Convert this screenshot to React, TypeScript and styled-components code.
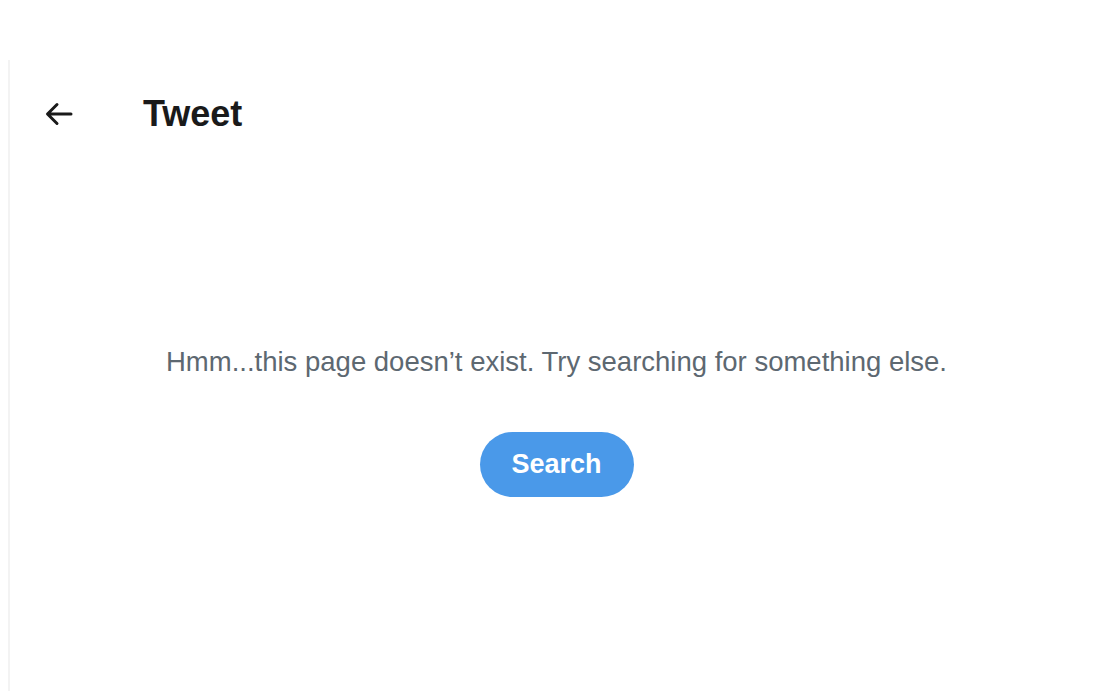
import styled, { createGlobalStyle } from 'styled-components'

const GlobalStyle = createGlobalStyle`
  html, body {
    margin: 0;
    padding: 0;
    background: #ffffff;
  }
  body {
    font-family: "Liberation Sans", Arial, sans-serif;
  }
`

const StyledPage = styled.div`
  min-height: 691px;
  padding-top: 60px;
  padding-left: 8px;
  box-sizing: border-box;
  display: flex;
`

const StyledColumn = styled.main`
  flex: 1;
  min-height: 631px;
  border-left: 2px solid #f3f3f3;
  display: flex;
  flex-direction: column;
`

const StyledHeader = styled.header`
  height: 108px;
  display: flex;
  align-items: center;
  padding-left: 34px;
  box-sizing: border-box;
`

const StyledBackButton = styled.button`
  width: 30px;
  height: 30px;
  padding: 0;
  border: none;
  background: transparent;
  display: flex;
  align-items: center;
  justify-content: center;
  margin-right: 69px;
  cursor: pointer;
`

const StyledTitle = styled.h1`
  margin: 0;
  font-size: 36px;
  font-weight: 700;
  color: #1a1a1a;
  letter-spacing: 0;
`

const StyledEmpty = styled.section`
  display: flex;
  flex-direction: column;
  align-items: center;
  padding-top: 178px;
  padding-left: 8px;
`

const StyledMessage = styled.p`
  margin: 0;
  font-size: 27.5px;
  color: #5d6871;
  line-height: 32px;
`

const StyledSearchButton = styled.button`
  margin-top: 54px;
  width: 154px;
  height: 65px;
  border: none;
  border-radius: 33px;
  background: #4a99e9;
  color: #ffffff;
  font-family: "Liberation Sans", Arial, sans-serif;
  font-size: 27px;
  font-weight: 700;
  cursor: pointer;
`

function BackArrow() {
  return (
    <svg width="30" height="30" viewBox="0 0 30 30" fill="none">
      <path
        d="M27 15H4M13 5.5L3.5 15L13 24.5"
        stroke="#1a1a1a"
        strokeWidth="3"
        strokeLinecap="round"
        strokeLinejoin="round"
      />
    </svg>
  )
}

export default function App() {
  return (
    <>
      <GlobalStyle />
      <StyledPage>
        <StyledColumn>
          <StyledHeader>
            <StyledBackButton aria-label="Back">
              <BackArrow />
            </StyledBackButton>
            <StyledTitle>Tweet</StyledTitle>
          </StyledHeader>
          <StyledEmpty>
            <StyledMessage>
              Hmm...this page doesn’t exist. Try searching for something else.
            </StyledMessage>
            <StyledSearchButton>Search</StyledSearchButton>
          </StyledEmpty>
        </StyledColumn>
      </StyledPage>
    </>
  )
}
